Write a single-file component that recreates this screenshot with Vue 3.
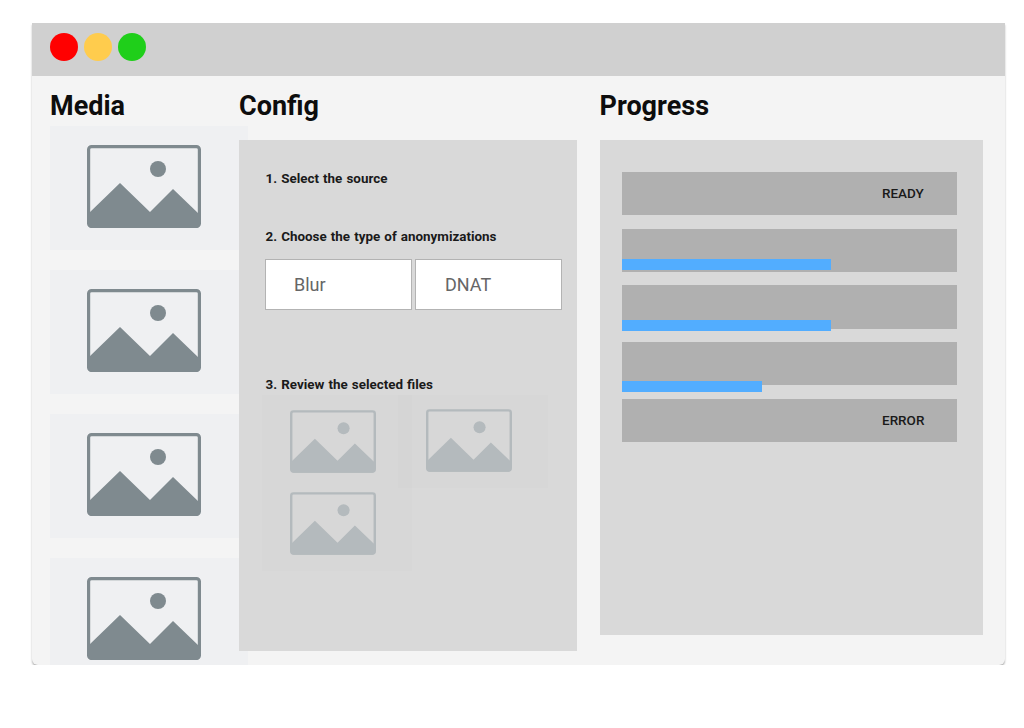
<template>
  <div class="window">
    <div class="title-bar">
      <span class="dot red"></span>
      <span class="dot yellow"></span>
      <span class="dot green"></span>
    </div>

    <div class="content">
      <section class="media">
        <h2 class="heading media-heading">Media</h2>
        <div v-for="n in 4" :key="n" class="media-card">
          <svg class="media-icon" viewBox="0 0 114 83">
            <rect x="1.6" y="1.6" width="110.8" height="79.8" rx="3" fill="none" stroke="#7f8a8f" stroke-width="3.2" />
            <circle cx="71" cy="24" r="8" fill="#7f8a8f" />
            <path d="M2 68 L33 38 L63 67 L86 44 L112 69 V80 Q112 83 109 83 H5 Q2 83 2 80 Z" fill="#7f8a8f" />
          </svg>
        </div>
      </section>

      <section class="config">
        <h2 class="heading">Config</h2>
        <div class="panel config-panel">
          <p class="step">1. Select the source</p>
          <p class="step step-two">2. Choose the type of anonymizations</p>
          <div class="options">
            <button class="option">Blur</button>
            <button class="option option-dnat">DNAT</button>
          </div>
          <p class="step step-three">3. Review the selected files</p>
          <div class="thumbs">
            <div v-for="n in 3" :key="n" class="thumb" :class="'thumb-' + n">
              <svg class="thumb-icon" viewBox="0 0 114 83">
                <rect x="1.6" y="1.6" width="110.8" height="79.8" rx="3" fill="none" stroke="#b4babd" stroke-width="3.2" />
                <circle cx="71" cy="24" r="8" fill="#b4babd" />
                <path d="M2 68 L33 38 L63 67 L86 44 L112 69 V80 Q112 83 109 83 H5 Q2 83 2 80 Z" fill="#b4babd" />
              </svg>
            </div>
          </div>
        </div>
      </section>

      <section class="progress">
        <h2 class="heading">Progress</h2>
        <div class="panel progress-panel">
          <div v-for="row in rows" :key="row.id" class="row">
            {{ row.label }}
            <div
              v-if="row.width"
              class="bar"
              :class="row.barClass"
              :style="{ width: row.width + 'px' }"
            ></div>
          </div>
        </div>
      </section>
    </div>
  </div>
</template>

<script setup>
const rows = [
  { id: 1, label: 'READY' },
  { id: 2, label: '', width: 209, barClass: 'bar-in' },
  { id: 3, label: '', width: 209, barClass: 'bar-over' },
  { id: 4, label: '', width: 140, barClass: 'bar-below' },
  { id: 5, label: 'ERROR' }
]
</script>

<style>
html,
body {
  background: #fff;
}
</style>

<style scoped>
.window {
  width: 973px;
  height: 642px;
  margin: 23px 0 0 32px;
  background: #f4f4f4;
  border-radius: 0 0 6px 6px;
  box-shadow: 0 2px 2px rgba(0, 0, 0, 0.3);
  overflow: hidden;
  font-family: Roboto, "Liberation Sans", sans-serif;
  display: flex;
  flex-direction: column;
}

.title-bar {
  height: 53px;
  flex: none;
  box-sizing: border-box;
  padding: 0 0 6px 18px;
  background: #d0d0d0;
  display: flex;
  align-items: center;
  gap: 6px;
}

.dot {
  width: 28px;
  height: 28px;
  border-radius: 50%;
}

.red {
  background: #ff0000;
}

.yellow {
  background: #ffcc4d;
}

.green {
  background: #1fcf1a;
}

.content {
  display: flex;
  flex: 1;
  min-height: 0;
  padding-left: 18px;
}

.heading {
  height: 64px;
  margin: 0;
  font-size: 27px;
  font-weight: 700;
  line-height: 60px;
  color: #0d0d0d;
}

.media {
  width: 189px;
  flex: none;
}

.media-heading {
  height: 50px;
}

.media-card {
  width: 198px;
  height: 124px;
  margin-bottom: 20px;
  background: #eff0f2;
  padding: 19px 0 0 37px;
  box-sizing: border-box;
}

.media-icon {
  display: block;
  width: 114px;
  height: 83px;
}

.config {
  width: 338px;
  flex: none;
  margin-right: 22.5px;
}

.panel {
  background: #d9d9d9;
  box-sizing: border-box;
}

.config-panel {
  height: 511px;
  padding: 31px 0 0 26px;
}

.step {
  margin: 0 0 0 0.5px;
  font-size: 13.4px;
  font-weight: 700;
  line-height: 16px;
  word-spacing: 0.8px;
  color: #1a1a1a;
}

.step-two {
  margin-top: 42px;
}

.step-three {
  margin-top: 67px;
}

.options {
  display: flex;
  gap: 3px;
  margin-top: 14px;
}

.option {
  width: 147px;
  height: 50.5px;
  box-sizing: border-box;
  padding: 0 0 0 28px;
  background: #fff;
  border: 1px solid #b3b3b3;
  font-family: inherit;
  font-size: 18px;
  color: #666;
  text-align: left;
}

.option-dnat {
  padding-left: 29px;
}

.thumbs {
  display: flex;
  flex-wrap: wrap;
  width: 300px;
  margin: 2.5px 0 0 -3px;
}

.thumb {
  width: 150px;
  box-sizing: border-box;
  background: rgba(0, 0, 0, 0.008);
  padding-left: 28px;
}

.thumb-1 {
  height: 93px;
  padding-top: 15px;
}

.thumb-2 {
  height: 93px;
  margin-left: -14px;
  padding-top: 14px;
}

.thumb-3 {
  height: 83px;
  padding-top: 4px;
}

.thumb-icon {
  display: block;
  width: 86px;
  height: 63px;
}

.progress {
  width: 383px;
  flex: none;
}

.progress-panel {
  height: 495px;
  padding: 31.8px 26px 0 22.5px;
  display: flex;
  flex-direction: column;
  gap: 13.5px;
}

.row {
  position: relative;
  height: 43.25px;
  flex: none;
  box-sizing: border-box;
  padding-left: 260px;
  background: #b0b0b0;
  font-size: 13.5px;
  font-weight: 500;
  line-height: 43px;
  color: #1a1a1a;
}

.bar {
  position: absolute;
  left: 0;
  height: 11px;
  background: #52adff;
}

.bar-in {
  bottom: 2px;
}

.bar-over {
  bottom: -2px;
}

.bar-below {
  bottom: -7px;
}
</style>
